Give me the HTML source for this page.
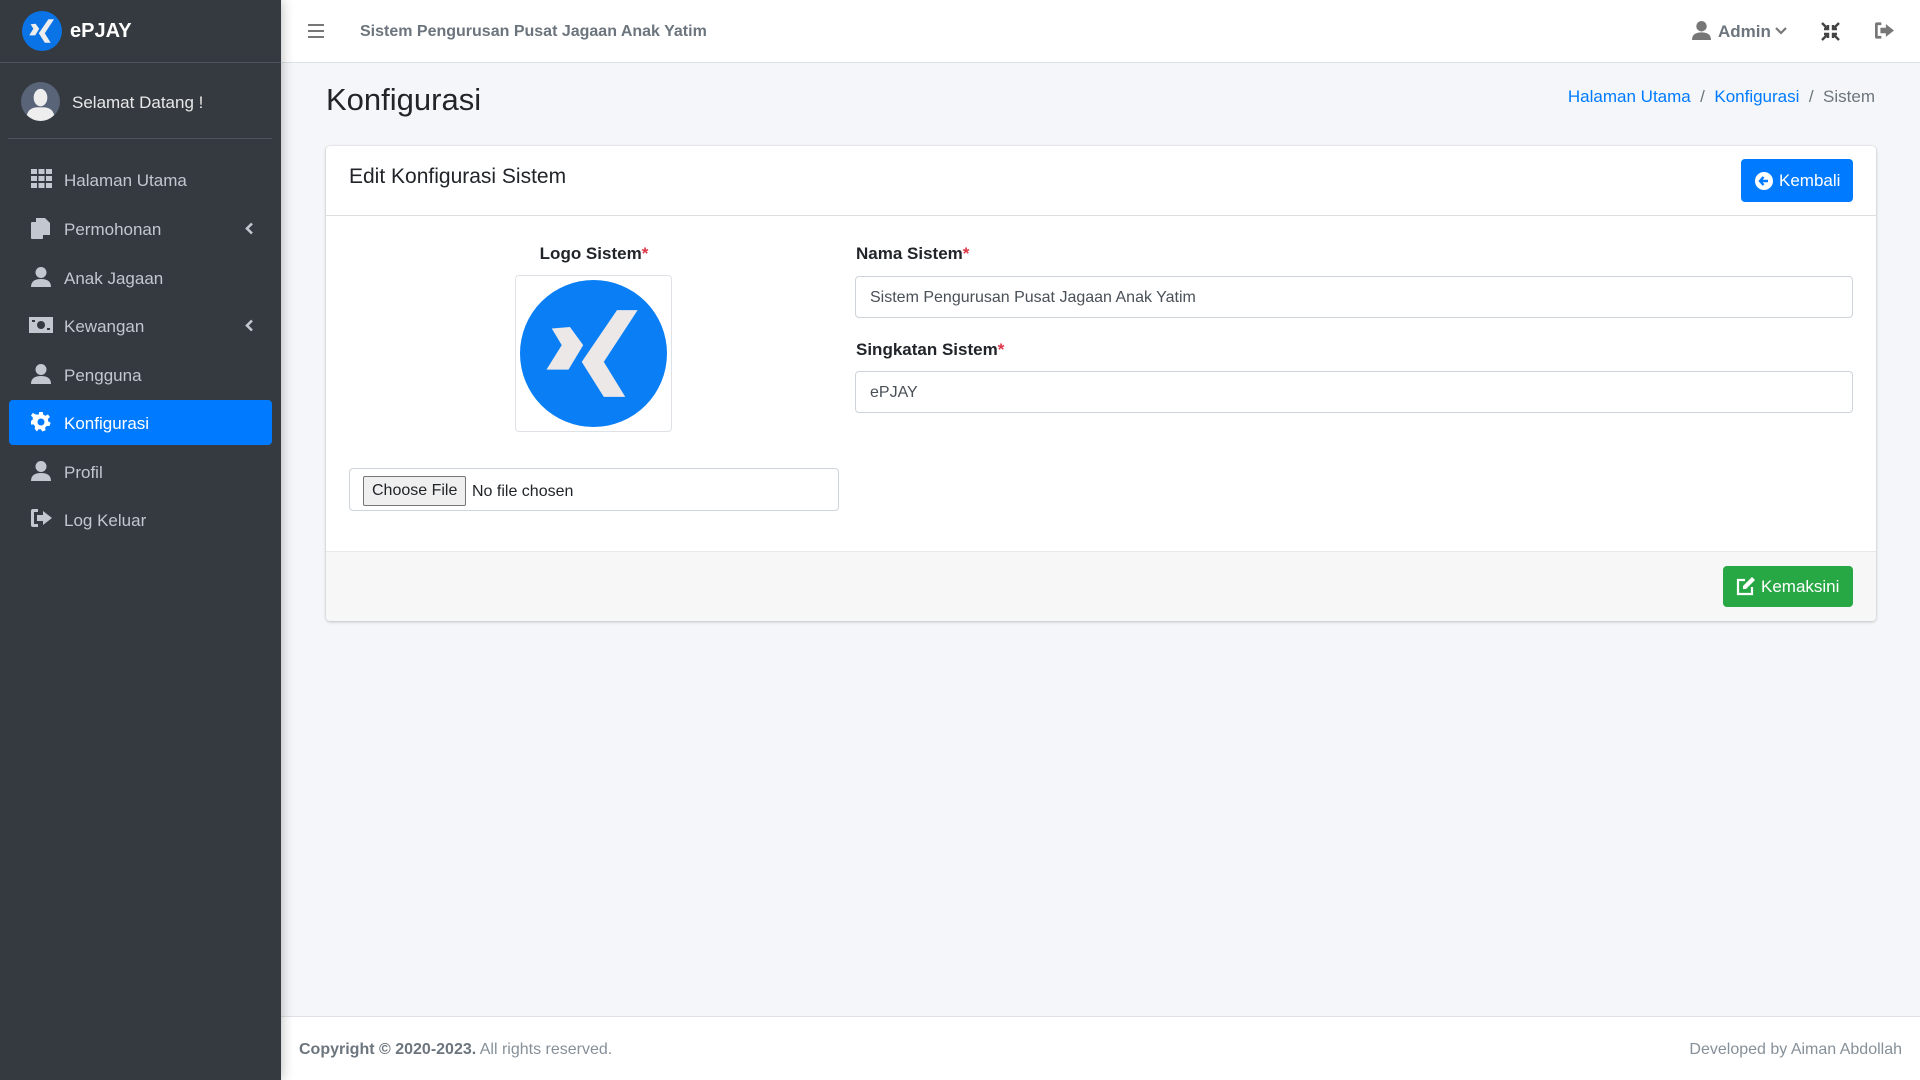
<!DOCTYPE html>
<html><head><meta charset="utf-8"><style>
*{box-sizing:border-box;margin:0;padding:0}
body{width:1920px;height:1080px;overflow:hidden;background:#f4f6f9;font-family:"Liberation Sans",sans-serif;color:#212529;position:relative;font-size:17px}
.abs{position:absolute}
#side{left:0;top:0;width:281px;height:1080px;background:#343a40;box-shadow:0 0 12px rgba(0,0,0,.3);z-index:2}
.nav{position:absolute;left:9px;width:263px;height:45px;color:#c2c7d0;font-size:17px;line-height:47px;padding-left:55px}
.nav svg{position:absolute;left:22px;top:12px}
.nav.act{background:#007bff;color:#fff;border-radius:4px}
.nav svg.chev{left:auto;right:18px;top:16px}
#hdr{left:281px;top:0;width:1639px;height:63px;background:#fff;border-bottom:1px solid #dee2e6}
.lbl{font-weight:bold;font-size:17px;color:#212529}
.lbl b{color:#dc3545}
.inp{border:1px solid #ced4da;border-radius:4px;background:#fff;height:42px;line-height:42px;padding-left:14px;font-size:16px;color:#495057}
</style></head><body>
<div id="side" class="abs">
  <svg class="abs" style="left:22px;top:11px" width="40" height="40" viewBox="0 0 100 100"><circle cx="50" cy="50" r="50" fill="#0a74e6"/><polygon fill="#eee" points="21.6,33 34,32 43,44.3 33,61 18,61 28.4,44.3"/><polygon fill="#eee" points="66,20.5 80,20.5 57,55.7 71.6,79.5 57,79.5 42,55.7"/></svg>
  <div class="abs" style="left:70px;top:20px;color:#fff;font-weight:bold;font-size:20px">ePJAY</div>
  <div class="abs" style="left:0;top:62px;width:281px;border-top:1px solid #4b545c"></div>
  <svg class="abs" style="left:21px;top:82px" width="39" height="39" viewBox="0 0 40 40"><circle cx="20" cy="20" r="20" fill="#5a6478"/><ellipse cx="20" cy="16" rx="7" ry="9" fill="#eee"/><path d="M6 34 Q8 25 20 26 Q32 25 34 34 Q28 40 20 40 Q12 40 6 34Z" fill="#eee"/></svg>
  <div class="abs" style="left:72px;top:93px;color:#e8e8e8;font-size:17px">Selamat Datang !</div>
  <div class="abs" style="left:8px;top:138px;width:264px;border-top:1px solid #4b545c"></div>
  <div class="nav" style="top:157px"><svg width="21" height="20" viewBox="0 0 21 20" fill="#c2c7d0"><rect x="0" y="0" width="6" height="5"/><rect x="7.5" y="0" width="6" height="5"/><rect x="15" y="0" width="6" height="5"/><rect x="0" y="7" width="6" height="5"/><rect x="7.5" y="7" width="6" height="5"/><rect x="15" y="7" width="6" height="5"/><rect x="0" y="14" width="6" height="5"/><rect x="7.5" y="14" width="6" height="5"/><rect x="15" y="14" width="6" height="5"/></svg>Halaman Utama</div>
  <div class="nav" style="top:206px"><svg width="20" height="22" viewBox="0 0 20 22" fill="#c2c7d0"><rect x="0" y="4" width="12" height="17" rx="1"/><path d="M5 0h9l5 5v12H5z"/></svg>Permohonan<svg class="chev" width="9" height="13" viewBox="0 0 9 13"><path d="M7 1.5L2 6.5l5 5" stroke="#c2c7d0" stroke-width="2.6" fill="none"/></svg></div>
  <div class="nav" style="top:255px"><svg width="20" height="20" viewBox="0 0 20 20" fill="#c2c7d0"><circle cx="10" cy="5.5" r="5.5"/><path d="M0 20q0-8 10-8t10 8z"/></svg>Anak Jagaan</div>
  <div class="nav" style="top:303px"><svg width="24" height="18" viewBox="0 0 24 18" fill="#c2c7d0" style="left:20px;top:14px"><rect width="24" height="16" /><circle cx="12" cy="8" r="4" fill="#343a40"/><rect x="3" y="3" width="3" height="2" fill="#343a40"/><rect x="18" y="11" width="3" height="2" fill="#343a40"/></svg>Kewangan<svg class="chev" width="9" height="13" viewBox="0 0 9 13"><path d="M7 1.5L2 6.5l5 5" stroke="#c2c7d0" stroke-width="2.6" fill="none"/></svg></div>
  <div class="nav" style="top:352px"><svg width="20" height="20" viewBox="0 0 20 20" fill="#c2c7d0"><circle cx="10" cy="5.5" r="5.5"/><path d="M0 20q0-8 10-8t10 8z"/></svg>Pengguna</div>
  <div class="nav act" style="top:400px"><svg width="20" height="20" viewBox="0 0 20 20" fill="#fff"><path d="M8 0h4l.6 3 2.4 1.2 2.7-1.6 2.2 3-2.2 2.2.3 2.6 2.7 1.6-1.3 3.6-3 -.2-1.8 2 .4 3-3.6 1.3-1.6-2.6h-2.6l-1.6 2.6L3 18.8l.4-3-1.8-2-3 .2L-2 10.4 .7 8.8 1 6.2-1.2 4l2.2-3 2.7 1.6L7.4 3z" transform="translate(1 0) scale(.9)"/><circle cx="10" cy="10" r="3.5" fill="#007bff"/></svg>Konfigurasi</div>
  <div class="nav" style="top:449px"><svg width="20" height="20" viewBox="0 0 20 20" fill="#c2c7d0"><circle cx="10" cy="5.5" r="5.5"/><path d="M0 20q0-8 10-8t10 8z"/></svg>Profil</div>
  <div class="nav" style="top:497px"><svg width="21" height="18" viewBox="0 0 21 18" fill="#c2c7d0"><path d="M7 0H2Q0 0 0 2v14q0 2 2 2h5v-3H3V3h4z"/><path d="M12 2l9 7-9 7v-4H6V6h6z"/></svg>Log Keluar</div>
</div>
<div id="hdr" class="abs">
  <div class="abs" style="left:27px;top:24px;width:16px"><div style="height:2px;background:#777;margin-bottom:4px"></div><div style="height:2px;background:#777;margin-bottom:4px"></div><div style="height:2px;background:#777"></div></div>
  <div class="abs" style="left:79px;top:23px;color:#6c757d;font-weight:bold;font-size:16px">Sistem Pengurusan Pusat Jagaan Anak Yatim</div>
  <svg class="abs" style="left:1411px;top:21px" width="19" height="19" viewBox="0 0 20 20" fill="#777"><circle cx="10" cy="5.5" r="5.5"/><path d="M0 20q0-8 10-8t10 8z"/></svg>
  <div class="abs" style="left:1437px;top:22px;color:#6c757d;font-weight:bold;font-size:17px">Admin</div>
  <svg class="abs" style="left:1494px;top:26px" width="12" height="9" viewBox="0 0 12 9"><path d="M1 2l5 5 5-5" stroke="#777" stroke-width="2.2" fill="none"/></svg>
  <svg class="abs" style="left:1540px;top:22px" width="19" height="19" viewBox="0 0 19 19" stroke="#444" stroke-width="2.4" fill="none"><path d="M1 1l6 6M7 3v4H3M18 1l-6 6M12 3v4h4M1 18l6-6M3 12h4v4M18 18l-6-6M16 12h-4v4"/></svg>
  <svg class="abs" style="left:1594px;top:22px" width="19" height="17" viewBox="0 0 21 18" fill="#777"><path d="M7 0H2Q0 0 0 2v14q0 2 2 2h5v-3H3V3h4z"/><path d="M12 2l9 7-9 7v-4H6V6h6z"/></svg>
</div>
<div class="abs" style="left:326px;top:82px;font-size:31px;color:#212529">Konfigurasi</div>
<div class="abs" style="right:45px;top:87px;font-size:17px;color:#6c757d"><span style="color:#007bff">Halaman Utama</span> &nbsp;/&nbsp; <span style="color:#007bff">Konfigurasi</span> &nbsp;/&nbsp; Sistem</div>
<div class="abs" style="left:326px;top:146px;width:1550px;height:475px;background:#fff;border-radius:4px;box-shadow:0 0 1px rgba(0,0,0,.2),0 1px 3px rgba(0,0,0,.2)">
  <div class="abs" style="left:0;top:0;width:100%;height:70px;border-bottom:1px solid rgba(0,0,0,.125)"></div>
  <div class="abs" style="left:23px;top:19px;font-size:21px">Edit Konfigurasi Sistem</div>
  <div class="abs" style="left:1415px;top:13px;width:112px;height:43px;background:#007bff;border-radius:4px;color:#fff;font-size:17px;line-height:43px;padding-left:38px"><svg class="abs" style="left:14px;top:13px" width="18" height="18" viewBox="0 0 18 18"><circle cx="9" cy="9" r="9" fill="#fff"/><path d="M13 9H5M8.5 5L5 9l3.5 4" stroke="#007bff" stroke-width="2.4" fill="none"/></svg>Kembali</div>
  <div class="abs lbl" style="left:168px;top:98px;width:200px;text-align:center">Logo Sistem<b>*</b></div>
  <div class="abs" style="left:189px;top:129px;width:157px;height:157px;border:1px solid #dee2e6;border-radius:4px"></div>
  <svg class="abs" style="left:194px;top:134px" width="147" height="147" viewBox="0 0 100 100"><circle cx="50" cy="50" r="50" fill="#0a7ff5"/><polygon fill="#ece8e8" points="21.6,33 34,32 43,44.3 33,61 18,61 28.4,44.3"/><polygon fill="#ece8e8" points="66,20.5 80,20.5 57,55.7 71.6,79.5 57,79.5 42,55.7"/></svg>
  <div class="abs inp" style="left:23px;top:322px;width:490px;height:43px;padding-left:14px;color:#212529">
    <span style="display:inline-block;position:absolute;left:13px;top:7px;height:30px;line-height:28px;padding:0 8px;border:1px solid #767676;border-radius:2px;background:#efefef;font-size:16px">Choose File</span>
    <span style="position:absolute;left:122px;top:2px;font-size:16px">No file chosen</span>
  </div>
  <div class="abs lbl" style="left:530px;top:98px">Nama Sistem<b>*</b></div>
  <div class="abs inp" style="left:529px;top:130px;width:998px">Sistem Pengurusan Pusat Jagaan Anak Yatim</div>
  <div class="abs lbl" style="left:530px;top:194px">Singkatan Sistem<b>*</b></div>
  <div class="abs inp" style="left:529px;top:225px;width:998px">ePJAY</div>
  <div class="abs" style="left:0;top:405px;width:100%;height:70px;background:#f7f7f7;border-top:1px solid rgba(0,0,0,.06);border-radius:0 0 4px 4px"></div>
  <div class="abs" style="left:1397px;top:420px;width:130px;height:41px;background:#28a745;border-radius:4px;color:#fff;font-size:17px;line-height:41px;padding-left:38px"><svg class="abs" style="left:13px;top:11px" width="20" height="19" viewBox="0 0 20 19"><path d="M9 3H2v14h14v-7" stroke="#fff" stroke-width="2.2" fill="none"/><path d="M16 0l3 3-9 9H7V9z" fill="#fff"/></svg>Kemaksini</div>
</div>
<div class="abs" style="left:281px;top:1016px;width:1639px;height:64px;background:#fff;border-top:1px solid #dee2e6"></div>
<div class="abs" style="left:299px;top:1041px;font-size:16px;color:#869099"><b style="color:#6c757d">Copyright © 2020-2023.</b> All rights reserved.</div>
<div class="abs" style="right:18px;top:1041px;font-size:16px;color:#869099">Developed by Aiman Abdollah</div>
</body></html>
